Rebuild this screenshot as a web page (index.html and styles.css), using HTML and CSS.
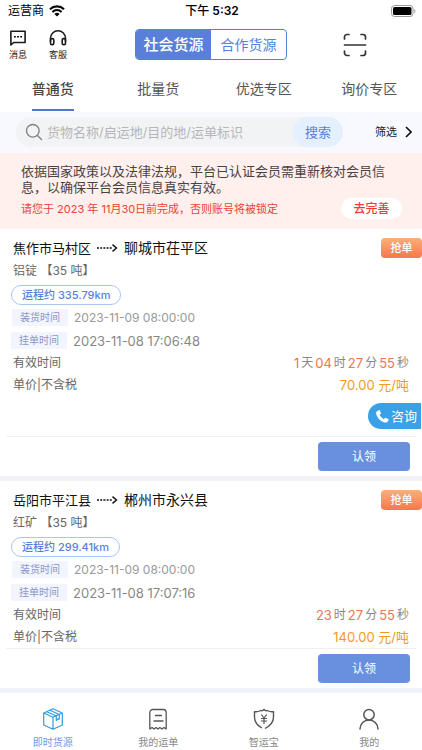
FILE: index.html
```html
<!DOCTYPE html>
<html lang="zh-CN">
<head>
<meta charset="utf-8">
<meta name="viewport" content="width=device-width, initial-scale=1">
<title>即时货源</title>
<link rel="stylesheet" href="styles.css">
</head>
<body>
<div class="status">
  <div class="carrier">运营商
    <svg width="16" height="12" viewBox="0 0 16 12" aria-hidden="true"><path d="M1 4.2A10.2 10.2 0 0 1 15 4.2M3.4 6.9A6.6 6.6 0 0 1 12.6 6.9" fill="none" stroke="#000" stroke-width="2.1"/><path d="M8 11.6 5.4 8.9a3.8 3.8 0 0 1 5.2 0z"/></svg>
  </div>
  <div class="clock">下午 <b>5:32</b></div>
  <div class="battery">
    <svg width="25" height="12" viewBox="0 0 25 12" aria-hidden="true"><rect x=".5" y=".5" width="21.5" height="11" rx="3" fill="none" stroke="#999"/><rect x="2" y="2" width="18.500" height="8" rx="1.600"/><path d="M23.300 4v4c1.500-.6 1.500-3.400 0-4z" fill="#999"/></svg>
  </div>
</div>

<header class="header">
  <div class="shortcuts">
    <a class="shortcut" href="#">
      <svg width="18" height="18" viewBox="0 0 18 18" aria-hidden="true"><path d="M1.900 2.200h14.200v11.300H4.700L1.900 16z" fill="none" stroke="#1a1a1a" stroke-width="1.600" stroke-linejoin="round"/><path d="M5 7.100h1.800v1.500H5zM8.100 7.100h1.800v1.500H8.100zM11.200 7.100H13v1.500h-1.800z"/></svg>
      消息
    </a>
    <a class="shortcut" href="#">
      <svg width="18" height="18" viewBox="0 0 18 18" fill="none" stroke="#1a1a1a" stroke-width="1.600" aria-hidden="true"><path d="M1.500 12.500V9.300a7.500 7.500 0 0 1 15 0v3.200"/><rect x="1.500" y="9.600" width="3.300" height="6" rx="1.400"/><rect x="13.200" y="9.600" width="3.300" height="6" rx="1.400"/></svg>
      客服
    </a>
  </div>
  <div class="segment">
    <button class="seg seg-on" type="button">社会货源</button>
    <button class="seg" type="button">合作货源</button>
  </div>
  <button class="scan" type="button" aria-label="扫一扫">
    <svg width="24" height="24" viewBox="0 0 24 24" fill="none" stroke="#333" stroke-width="1.700" stroke-linecap="round" aria-hidden="true"><path d="M1.500 6V4a2.500 2.500 0 0 1 2.500-2.500h2M18 1.500h2A2.500 2.500 0 0 1 22.500 4v2M22.500 18v2a2.500 2.500 0 0 1-2.500 2.500h-2M6 22.500H4A2.500 2.500 0 0 1 1.500 20v-2M1.500 12h21"/></svg>
  </button>
</header>

<nav class="tabs">
  <a class="tab tab-on" href="#">普通货</a>
  <a class="tab" href="#">批量货</a>
  <a class="tab" href="#">优选专区</a>
  <a class="tab" href="#">询价专区</a>
</nav>

<form class="search">
  <div class="searchbox">
    <svg width="18" height="18" viewBox="0 0 18 18" fill="none" stroke="#858585" stroke-width="1.400" stroke-linecap="round" aria-hidden="true"><circle cx="7.800" cy="7.800" r="6.300"/><path d="M12.500 12.500l4 4"/></svg>
    <input type="text" aria-label="搜索货源" placeholder="货物名称/启运地/目的地/运单标识">
    <button class="go" type="button">搜索</button>
  </div>
  <button class="filter" type="button">筛选
    <svg width="7" height="12" viewBox="0 0 7 12" fill="none" stroke="#111" stroke-width="1.600" aria-hidden="true"><path d="M1 1l5 5-5 5"/></svg>
  </button>
</form>

<section class="notice">
  <p class="notice-text">依据国家政策以及法律法规，平台已认证会员需重新核对会员信息，以确保平台会员信息真实有效。</p>
  <div class="notice-row">
    <p class="deadline">请您于 2023 年 11月30日前完成，否则账号将被锁定</p>
    <button class="complete" type="button">去完善</button>
  </div>
</section>

<main class="list">
  <article class="card">
    <div class="route">
      <h2><span class="from">焦作市马村区</span>
        <svg width="21" height="8" viewBox="0 0 21 8" fill="none" stroke="#111" stroke-width="1.400" aria-hidden="true"><path d="M0 4h16" stroke-dasharray="2 1.200"/><path d="M15.500.6 19.500 4l-4 3.400"/></svg>
        <span class="to">聊城市茌平区</span></h2>
      <span class="badge">抢单</span>
    </div>
    <p class="goods">铝锭 【35 吨】</p>
    <div class="distance"><span class="pill">运程约 335.79km</span></div>
    <div class="time"><span class="tag">装货时间</span>2023-11-09 08:00:00</div>
    <div class="time time-post"><span class="tag">挂单时间</span>2023-11-08 17:06:48</div>
    <div class="row"><span>有效时间</span><span class="left"><b>1</b>天<b>04</b>时<b>27</b>分<b>55</b>秒</span></div>
    <div class="row"><span>单价|不含税</span><span class="price">70.00 元/吨</span></div>
    <div class="contact">
      <a class="consult" href="#">
        <svg width="13" height="13" viewBox="0 0 13 13" fill="#fff" aria-hidden="true"><path d="M1 1.300 2.700.2c.5-.3 1-.1 1.200.4l1 2.300c.2.500 0 .9-.4 1.200l-.9.700c.8 1.900 2.400 3.500 4.300 4.400l.9-1c.3-.4.8-.5 1.200-.3l2.200 1.200c.5.300.600.8.300 1.200l-1.200 1.600c-.4.600-1.100.8-1.800.7C4.800 11.900.9 7.800.1 3.200 0 2.400.3 1.700 1 1.300z"/></svg>
        咨询
      </a>
    </div>
    <div class="actions"><button class="claim" type="button">认领</button></div>
  </article>

  <article class="card">
    <div class="route">
      <h2><span class="from">岳阳市平江县</span>
        <svg width="21" height="8" viewBox="0 0 21 8" fill="none" stroke="#111" stroke-width="1.400" aria-hidden="true"><path d="M0 4h16" stroke-dasharray="2 1.200"/><path d="M15.500.6 19.500 4l-4 3.400"/></svg>
        <span class="to">郴州市永兴县</span></h2>
      <span class="badge">抢单</span>
    </div>
    <p class="goods">红矿 【35 吨】</p>
    <div class="distance"><span class="pill">运程约 299.41km</span></div>
    <div class="time"><span class="tag">装货时间</span>2023-11-09 08:00:00</div>
    <div class="time time-post"><span class="tag">挂单时间</span>2023-11-08 17:07:16</div>
    <div class="row"><span>有效时间</span><span class="left"><b>23</b>时<b>27</b>分<b>55</b>秒</span></div>
    <div class="row"><span>单价|不含税</span><span class="price">140.00 元/吨</span></div>
    <div class="actions"><button class="claim" type="button">认领</button></div>
  </article>
</main>

<nav class="tabbar">
  <a class="item item-on" href="#">
    <svg width="22" height="22" viewBox="0 0 22 22" fill="none" stroke="#369cdf" stroke-width="1.200" stroke-linejoin="round" aria-hidden="true"><path d="M11 .8 20.300 5v12L11 21.300 1.700 17V5zM1.700 5 11 9.300 20.300 5M11 9.300v12M4.800 3.700l9.500 4.300v4.500l1.500-1.600 1.500.2V6.500L8 2.200"/></svg>
    即时货源
  </a>
  <a class="item" href="#">
    <svg width="22" height="22" viewBox="0 0 22 22" fill="none" stroke="#555" stroke-width="1.300" stroke-linejoin="round" stroke-linecap="round" aria-hidden="true"><path d="M2.800 21V4.500a3 3 0 0 1 3-3h10.400a3 3 0 0 1 3 3V21l-2.300-1.500-2 1.500-2-1.500L11 21l-1.900-1.500-2 1.500-2-1.500zM8.500 7.500h6M7 13h9"/></svg>
    我的运单
  </a>
  <a class="item" href="#">
    <svg width="22" height="22" viewBox="0 0 22 22" fill="none" stroke="#555" stroke-width="1.400" stroke-linejoin="round" aria-hidden="true"><path d="M9 20C4.200 17.500 1.500 14 1.500 9V3.700C4 4 6 3.500 7.800 2.500 9 3.200 10 2.800 11 1.400c1 1.400 2 1.800 3.200 1.100 1.800 1 3.800 1.500 6.300 1.200V9c0 5-2.700 8.500-8.500 11.500"/><path d="M8.300 6.500 11 10l2.700-3.500M11 10v6M8 10.500h6M8 13h6" stroke-width="1.200"/></svg>
    智运宝
  </a>
  <a class="item" href="#">
    <svg width="22" height="22" viewBox="0 0 22 22" fill="none" stroke="#555" stroke-width="1.500" stroke-linecap="round" aria-hidden="true"><circle cx="11" cy="6.700" r="5.200"/><path d="M2 21c.2-5.200 4-9.100 9-9.100s8.800 3.900 9 9.100"/></svg>
    我的
  </a>
</nav>
</body>
</html>
```
FILE: styles.css
```css
* {
  box-sizing: border-box;
}

body {
  margin: 0;
  min-height: 100vh;
  display: flex;
  flex-direction: column;
  background: #fff;
  color: #666;
  font-family: Inter, "Noto Sans CJK SC", sans-serif;
  font-size: 12px;
  line-height: 16px;
}

a {
  color: inherit;
  text-decoration: none;
}

p,
h2 {
  margin: 0;
}

button {
  margin: 0;
  padding: 0;
  border: 0;
  background: none;
  font: inherit;
  color: inherit;
}

svg {
  flex: none;
}

/* Status bar */
.status {
  display: grid;
  grid-template-columns: 1fr auto 1fr;
  align-items: center;
  height: 21px;
  padding: 0 6px 0 8px;
  color: #000;
}

.carrier {
  display: flex;
  align-items: center;
  gap: 5px;
}

.clock {
  font-size: 12px;
  font-weight: 500;
}

.clock b {
  font-weight: 600;
}

.battery {
  display: flex;
  justify-content: flex-end;
}

/* Header */
.header {
  display: grid;
  grid-template-columns: 1fr auto 1fr;
  align-items: center;
  height: 47px;
}

.shortcuts {
  display: flex;
  gap: 22px;
  padding-left: 9px;
}

.shortcut {
  display: flex;
  flex-direction: column;
  align-items: center;
  gap: 1px;
  color: #222;
  font-size: 9px;
  line-height: 13px;
}

.segment {
  display: flex;
  width: 152px;
  height: 31px;
  border: 1px solid #5a7fda;
  border-radius: 4px;
  overflow: hidden;
}

.seg {
  flex: 1;
  color: #5a7fda;
  font-size: 14px;
}

.seg-on {
  background: #5a7fda;
  color: #fff;
  font-size: 15px;
  font-weight: 500;
}

.scan {
  justify-self: center;
  height: 24px;
}

/* Category tabs */
.tabs {
  display: grid;
  grid-template-columns: repeat(4, 1fr);
  justify-items: center;
  height: 44px;
}

.tab {
  height: 43px;
  border-bottom: 2px solid transparent;
  color: #555;
  font-size: 14px;
  line-height: 41px;
}

.tab-on {
  border-color: #5474cd;
  color: #444;
  font-weight: 500;
}

/* Search */
.search {
  display: flex;
  align-items: center;
  justify-content: space-between;
  gap: 32px;
  padding: 5px 9px 6px 16px;
  background: #f7f9fe;
}

.searchbox {
  flex: 1;
  display: flex;
  align-items: center;
  gap: 4px;
  height: 30px;
  padding-left: 9px;
  border-radius: 15px;
  background: #f2f3f5;
}

.searchbox input {
  flex: 1;
  min-width: 0;
  padding: 0;
  border: 0;
  outline: 0;
  background: none;
  font: inherit;
  font-size: 13px;
  color: #333;
}

.searchbox input::placeholder {
  color: #b5b6ba;
}

.go {
  width: 50px;
  height: 30px;
  border-radius: 15px;
  background: #e4f0fe;
  color: #5a7fda;
  font-size: 13px;
}

.filter {
  display: flex;
  align-items: center;
  gap: 8px;
  padding-right: 1px;
  color: #222;
  font-size: 11px;
}

/* Notice */
.notice {
  padding: 10px 20px 10px 21px;
  background: #ffefed;
}

.notice-text {
  color: #4a4242;
  font-size: 13px;
  line-height: 16px;
}

.notice-row {
  display: flex;
  align-items: center;
  justify-content: space-between;
  margin-top: 3px;
}

.deadline {
  color: #eb4338;
  font-size: 11px;
}

.complete {
  width: 61px;
  height: 21px;
  border-radius: 11px;
  background: #fff;
  color: #ef3b3b;
  font-size: 12px;
  font-weight: 500;
}

/* Cargo cards */
.card {
  padding-top: 8px;
  border-bottom: 5px solid #f1f1f8;
}

.route {
  display: flex;
  align-items: center;
  justify-content: space-between;
  height: 22px;
  padding-left: 13px;
}

.route h2 {
  display: flex;
  align-items: center;
  gap: 6px;
  color: #111;
  font-size: 14px;
  font-weight: 400;
}

.route .from {
  font-size: 13px;
}

.badge {
  width: 41px;
  height: 20px;
  border-radius: 4px;
  background: linear-gradient(#fbb077, #f8764f);
  color: #fff;
  font-size: 11px;
  font-weight: 500;
  line-height: 20px;
  text-align: center;
}

.goods {
  padding-left: 13px;
  line-height: 24px;
}

.distance {
  display: flex;
  align-items: center;
  height: 23px;
  padding-left: 11px;
}

.pill {
  padding: 0 10px;
  border: 1px solid #a9c6f3;
  border-radius: 10px;
  color: #5a7fda;
  font-size: 11px;
  font-weight: 500;
  line-height: 18px;
}

.time {
  display: flex;
  align-items: center;
  gap: 6px;
  height: 23px;
  padding-left: 12px;
  color: #999;
  font-size: 12px;
}

.time-post {
  padding-left: 11px;
  color: #888;
  font-size: 13px;
}

.tag {
  padding: 0 8px;
  background: #f2f5fd;
  color: #8a97c8;
  font-size: 10px;
  line-height: 17px;
}

.row {
  display: flex;
  align-items: center;
  justify-content: space-between;
  height: 22px;
  padding: 0 13px;
}

.left {
  display: flex;
  gap: 2px;
  color: #888;
}

.left b {
  color: #ee7650;
  font-size: 13px;
  font-weight: 400;
}

.price {
  color: #f39a25;
  font-size: 13px;
}

.contact {
  display: flex;
  justify-content: flex-end;
  padding: 7px 1px 7px 0;
}

.consult {
  display: flex;
  align-items: center;
  gap: 2px;
  height: 26px;
  padding: 0 4px 0 8px;
  border-radius: 13px 0 0 13px;
  background: #3aa1e8;
  color: #fff;
  font-size: 13px;
}

.actions {
  display: flex;
  justify-content: flex-end;
  margin: 0 6px;
  padding: 5px 6px;
  border-top: 1px solid #f0f0f4;
}

.claim {
  width: 92px;
  height: 29px;
  border-radius: 4px;
  background: #6990df;
  color: #fff;
  font-size: 12px;
}

/* Bottom navigation */
.tabbar {
  flex: 1;
  display: grid;
  grid-template-columns: repeat(4, 1fr);
  align-items: end;
}

.item {
  display: flex;
  flex-direction: column;
  align-items: center;
  gap: 4px;
  color: #888;
  font-size: 10px;
}

.item-on {
  color: #7298ec;
}
```
